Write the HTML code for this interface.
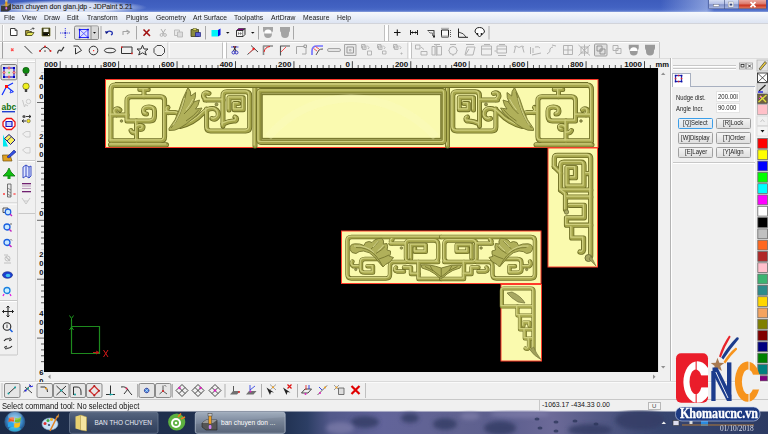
<!DOCTYPE html>
<html><head><meta charset="utf-8">
<style>
*{margin:0;padding:0;box-sizing:border-box}
html,body{width:768px;height:434px;overflow:hidden;background:#f0f0f0;font-family:"Liberation Sans",sans-serif;color:#000}
.a{position:absolute}
.t{position:absolute;white-space:nowrap;line-height:1}
#title{left:0;top:0;width:768px;height:12px;background:linear-gradient(90deg,rgba(255,255,255,0) 0%,rgba(255,255,255,0) 86%,rgba(190,205,240,.55) 92%,rgba(255,255,255,0) 93%),linear-gradient(180deg,#3d5cbc 0%,#4262c2 60%,#4c6cc8 85%,#8aa0dc 100%)}
#menu{left:0;top:12px;width:768px;height:12px;background:linear-gradient(180deg,#f6f8fc 0%,#e7ecf6 60%,#dde4f2 100%);border-bottom:1px solid #d2d4da}
.mi{position:absolute;top:14.3px;font-size:7.3px;color:#1a1a1a;transform:scaleX(.93);transform-origin:0 0;white-space:nowrap;line-height:1}
.sep{position:absolute;width:1px;background:#a0a0a0;border-right:1px solid #fff}
.grip{position:absolute;width:3px;border-left:1px solid #fff;border-right:1px solid #b8b8b8}
</style></head><body>
<!-- title bar -->
<div id="title" class="a"></div>
<div class="a" style="left:0;top:0;width:150px;height:12px;background:radial-gradient(ellipse 52% 62% at 46% 62%,rgba(226,232,246,.97) 0%,rgba(222,229,245,.92) 62%,rgba(200,212,238,.4) 85%,rgba(160,180,225,0) 100%)"></div>
<svg class="a" style="left:0;top:0" width="12" height="12" viewBox="0 0 12 12">
 <path d="M1 6 L5 3.5 H11 V9.5 L8 11.5 H1 Z" fill="#3a3a3a"/>
 <path d="M1 6 L5 3.5 H11 L8 6 Z" fill="#8a8a8a"/>
 <rect x="5.3" y="0.5" width="2" height="6" fill="#e8a020"/>
 <rect x="5" y="0" width="2.6" height="1.6" fill="#bbb"/>
 <rect x="5.4" y="7" width="1.8" height="2.5" rx=".8" fill="#d070f0"/>
</svg>
<div class="t" style="left:12px;top:3.9px;font-size:6.9px;color:#1c1c1c;-webkit-text-stroke:.12px #1c1c1c">ban chuyen don gian.jdp - JDPaint 5.21</div>
<svg class="a" style="left:700px;top:0" width="68" height="12" viewBox="700 0 68 12">
 <defs>
  <linearGradient id="wb" x1="0" x2="0" y1="0" y2="1"><stop offset="0" stop-color="#d4dcf2"/><stop offset=".45" stop-color="#b4c0e6"/><stop offset=".55" stop-color="#8696cc"/><stop offset="1" stop-color="#a8b6e2"/></linearGradient>
  <linearGradient id="wc" x1="0" x2="0" y1="0" y2="1"><stop offset="0" stop-color="#eaa8a0"/><stop offset=".45" stop-color="#dc7a6c"/><stop offset=".6" stop-color="#c83420"/><stop offset="1" stop-color="#e07a60"/></linearGradient>
 </defs>
 <path d="M708.5 0 V8 Q708.5 9 709.5 9 H765.5 Q766.5 9 766.5 8 V0 Z" fill="#3c4c80"/>
 <rect x="709" y="0" width="15" height="8.5" fill="url(#wb)"/>
 <rect x="724.6" y="0" width="14" height="8.5" fill="url(#wb)"/>
 <rect x="739" y="0" width="27" height="8.5" fill="url(#wc)"/>
 <rect x="713.5" y="4.6" width="5.5" height="1.8" fill="#fff" stroke="#555" stroke-width=".3"/>
 <rect x="728.2" y="2" width="5.5" height="5" fill="#fff" stroke="#555" stroke-width=".3"/>
 <rect x="729.6" y="3.6" width="2.7" height="2" fill="#3a4a80"/>
 <path d="M750.5 2 L755.5 7.2 M755.5 2 L750.5 7.2" stroke="#fff" stroke-width="1.8"/>
</svg>
<!-- menu -->
<div id="menu" class="a"></div>
<div class="mi" style="left:4px">File</div>
<div class="mi" style="left:21.5px">View</div>
<div class="mi" style="left:44px">Draw</div>
<div class="mi" style="left:67px">Edit</div>
<div class="mi" style="left:86.5px">Transform</div>
<div class="mi" style="left:125.5px">Plugins</div>
<div class="mi" style="left:155.5px">Geometry</div>
<div class="mi" style="left:192.5px">Art Surface</div>
<div class="mi" style="left:233.5px">Toolpaths</div>
<div class="mi" style="left:270.5px">ArtDraw</div>
<div class="mi" style="left:303px">Measure</div>
<div class="mi" style="left:336.5px">Help</div>

<!-- canvas -->
<div class="a" style="left:44px;top:68px;width:614px;height:304px;background:#000"></div>



<!-- canvas ornaments -->
<svg class="a" style="left:0;top:0" width="768" height="434" viewBox="0 0 768 434">
<defs>
<style>
.pf{fill:#fafaae;stroke:#ff3a2a;stroke-width:1}
.dk{fill:none;stroke:#6e6e26;stroke-width:5;stroke-linejoin:round;stroke-linecap:round}
.md{fill:none;stroke:#a6a64c;stroke-width:3.3;stroke-linejoin:round;stroke-linecap:round}
.lt{fill:none;stroke:#cfcf7e;stroke-width:1.3;stroke-linejoin:round;stroke-linecap:round}
.lf{fill:#b0b05a;stroke:#74742e;stroke-width:.9;stroke-linejoin:round}
.vn{fill:none;stroke:#76762e;stroke-width:.9}
</style>
<g id="o1">
 <path d="M111 140.8 V90 Q111 85 115 85 H351.25"/>
 <path d="M110.5 144.8 H166.5"/>
 <path d="M111 140.8 H160.6 Q164.6 140.8 164.6 136.8 V100.7 Q164.6 96.7 160.6 96.7 H131 Q127 96.7 127 100.7 V121 H150 Q154.5 121 154.5 116 V111 Q154.5 107 149 107 Q143.5 107 143.5 111 Q143.5 114 146.5 114"/>
 <path d="M144 86 V96.7 M139.8 89.6 H148.2"/>
 <path d="M111 115 H127 M116.5 115 Q113.5 112 115.5 109.5 Q118 108 120 110"/>
 <path d="M136.5 121 V140.8 M136.5 127.5 Q140 124 143 126.5 Q143.5 129.5 140.5 129.5 M136.5 133 Q132 133.5 131 130.5"/>
 <path d="M206.6 109 V127 Q206.6 131 210.6 131 H245.7 Q249.7 131 249.7 127 V95.8 Q249.7 91.8 245.7 91.8 H227 Q223 91.8 223 95.8 V126"/>
 <path d="M229 110 V97.8 H243.2 V109.7 H234.2 V103.6 H238.5"/>
 <path d="M205 100 H223 M206.5 100 Q202.5 97.5 204 94 Q206 92 209 93.5"/>
 <path d="M223 124 Q230 120.5 235.5 121 Q238 118.5 235 117"/>
 <path d="M255 86 V146"/>
 <path d="M166 112.5 H175 Q179.5 113 180.5 118 M168.5 112.5 Q165.5 110 168 107.5"/>
 <path d="M180 126.5 Q194 123 202.5 113.5 Q208.5 107.5 214.5 108.8 Q219.5 111 218 116.5 Q215.5 120.5 212 118.5"/>
</g>
<g id="leaf1">
 <path d="M169 128.5 Q176 120 179 110 Q182 99 188 87.5 Q191.5 91.5 190.8 96 L195.5 92.5 Q196 98 193.5 102 L199.5 100 Q198.5 106 195.5 109 L202 108 Q199.5 114 193 118.5 Q186 124.5 180 128 Q175 131 169 130.5 Z"/>
 <path class="vn" d="M171 128 Q181 118 186.5 92 M184 114 Q190 109 194 102 M186 121 Q194 116 199 109.5"/>
 <path fill="none" stroke="#d6d690" stroke-width=".9" d="M173 125.5 Q180 116 184.5 98 M186 110 Q190 105 193 99"/>
</g>
<g id="o2">
 <path d="M554.3 166.7 V158.4 Q554.3 155.4 557.3 155.4 H587.7 Q590.7 155.4 590.7 158.4 V256"/>
 <path d="M554.3 166.7 L560.6 173 V190 H590.7"/>
 <path d="M560.6 174 V166 Q560.6 162.2 564 162.2 H581 Q584 162.2 584 165.2 V186 H567 V167.5 H575.5 V177.7 H571"/>
 <path d="M586.5 173.6 H590"/>
 <path d="M560.6 190 L565.5 194 V209.5"/>
 <path d="M567.5 197 H590.7"/>
 <path d="M569.5 205.3 H584.3 V217.8 H566.5 V225.2 H590.7"/>
 <path d="M571.7 227.5 V238 H583.6 V250 Q583 253 580 252"/>
</g>
<g id="o3">
 <path d="M441.25 237 H351.5 Q347.5 237 347.5 241 V274.5 Q347.5 278.5 351.5 278.5 H386 Q390 278.5 390 274.5 V266 Q390 262 394 262 H406"/>
 <path d="M438.2 262 H410 Q406 262 406 258 V244.5 Q406 240.5 410 240.5 H434.2 Q438.2 240.5 438.2 244.5 V258 Q438.2 262 434.2 262"/>
 <path d="M411 258.5 V245 H425.8 V251.8 H415 V248.5"/>
 <path d="M390.5 243.6 H406 M392 243.6 Q389.5 241 392.5 239.5"/>
 <path d="M386.5 259 H365 Q361 259 361 263 V269.5 Q361 272.6 365 272.6 H373 V266.2 H367.5"/>
 <path d="M359 266.4 H353.5 Q350.5 264.5 352.5 261.5"/>
 <path d="M396 267.5 Q393.5 270.5 397 271.5 H404 M404 267.5 H411 V274 H418.5"/>
 <path d="M418.5 262 V279 H441.25"/>
</g>
<g id="o4">
 <path d="M533.5 350 V291 Q533.5 288.5 531 288.5 H504 Q501.8 288.5 501.8 291 V306.5 H533"/>
 <path d="M517.5 306.5 V315.5 H533 M520 315.5 V329.5 H533 M524.8 329.5 V338.5 H533 M529 338.5 V347 Q528 350 525.5 348.5"/>
 <path d="M523.5 326 V322.5 H529.5 V326"/>
</g>
<g id="leaf3">
 <path d="M350 249.5 Q349 244.5 354.5 243.8 Q360 243.3 364 245.5 L365.5 242.5 Q369.5 240.5 372 242.5 L374.5 240 Q378 238 382 238.3 Q384.5 241 383.3 244 L387 243.5 Q388.3 247 387 250 L390.5 251 Q391 254 389.5 256.3 L393.5 257.5 Q391 262.5 385.5 264.5 L383 267 Q378.5 262 374.5 257 Q369.5 251.5 363.5 251 Q358.5 251 356 253.5 Q351 253.5 350 249.5 Z"/>
 <path class="vn" d="M356 247.5 Q368 247 376 256 Q380 261 382.5 266 M371 249 Q376 245 379 241 M376 253.5 Q382 250 385 246.5 M379 259 Q385 257 389 255"/>
 <path fill="none" stroke="#d6d690" stroke-width=".9" d="M354 246 Q366 245 374 252.5 M373 247 Q376 243.5 378.5 241 M377.5 251 Q381.5 248 383.5 245"/>
</g>
<g id="fan3">
 <path d="M421 265 Q430 264 441.25 268 Q452 264 461.5 265 L460 268 Q452 270 447 274 Q443 278 441.25 278.5 Q439 278 435 274 Q430 270 422 268 Z"/>
 <path class="vn" d="M425 266.5 Q434 270 441.25 277 Q448 270 457.5 266.5 M441.25 268 V277 M430 265.5 L433 271 M452 265.5 L449 271"/>
</g>
</defs>
<!-- panel 1 -->
<rect class="pf" x="105.5" y="79.5" width="492.5" height="68"/>
<g>
 <use href="#o1" class="dk"/>
 <use href="#o1" class="md"/>
 <use href="#o1" class="lt" transform="translate(-.9,-.9)"/>
 <use href="#o1" class="dk" transform="translate(702.5,0) scale(-1,1)"/>
 <use href="#o1" class="md" transform="translate(702.5,0) scale(-1,1)"/>
 <use href="#o1" class="lt" transform="translate(701.6,-.9) scale(-1,1)"/>
 <path d="M115 85 H588" class="dk" style="stroke-width:5.8;stroke-linecap:butt"/><path d="M115 85 H588" class="md" style="stroke-width:4;stroke-linecap:butt"/><path d="M115 84 H588" class="lt" style="stroke-width:1.4;stroke-linecap:butt"/>
 <use href="#leaf1" class="lf"/>
 <use href="#leaf1" class="lf" transform="translate(702.5,0) scale(-1,1)"/>
 <g fill="#9a9a50" stroke="#6a6a30" stroke-width=".7"><circle cx="216.5" cy="104.4" r="1.5"/><circle cx="486" cy="104.4" r="1.5"/><circle cx="121.5" cy="121" r="1.3"/><circle cx="581" cy="121" r="1.3"/></g>
 <rect x="258.8" y="90.8" width="185.5" height="51.5" rx="2" fill="none" stroke="#6e6e26" stroke-width="5.4"/>
 <rect x="258.8" y="90.8" width="185.5" height="51.5" rx="2" fill="none" stroke="#a6a64c" stroke-width="3.6"/>
 <rect x="258" y="90" width="185.5" height="51.5" rx="2" fill="none" stroke="#cfcf7e" stroke-width="1.2"/>
 <rect x="262" y="94.5" width="179" height="44" fill="none" stroke="#7a7a30" stroke-width="1.6"/>
 <rect x="263" y="95.5" width="177" height="42" fill="#fafab0"/>
 <path d="M268 137 Q300 100 351 98 Q402 100 436 137" fill="none" stroke="#fdfdc4" stroke-width="8" opacity=".3"/>
</g>

<!-- panel 2 -->
<rect class="pf" x="548" y="148" width="49.5" height="119"/>
<use href="#o2" class="dk" style="stroke-width:5.2"/>
<use href="#o2" class="md" style="stroke-width:3.5"/>
<use href="#o2" class="lt" transform="translate(-.9,-.9)"/>
<circle cx="566.5" cy="212" r="2.2" fill="#a8a862" stroke="#707038" stroke-width=".8"/>
<circle cx="588.5" cy="258" r="3.5" fill="#a8a862" stroke="#707038" stroke-width="1"/>
<path d="M589 259 L596 266 L591 256 Z" fill="#a0a05a" stroke="#707038" stroke-width=".6"/>
<!-- panel 3 -->
<rect class="pf" x="341.5" y="231" width="199.5" height="52.5"/>
<use href="#o3" class="dk" style="stroke-width:4.4"/>
<use href="#o3" class="md" style="stroke-width:2.9"/>
<use href="#o3" class="lt" transform="translate(-.8,-.8)"/>
<use href="#o3" class="dk" style="stroke-width:4.4" transform="translate(882.5,0) scale(-1,1)"/>
<use href="#o3" class="md" style="stroke-width:2.9" transform="translate(882.5,0) scale(-1,1)"/>
<use href="#o3" class="lt" transform="translate(881.7,-.8) scale(-1,1)"/>
<use href="#leaf3" class="lf"/>
<use href="#leaf3" class="lf" transform="translate(882.5,0) scale(-1,1)"/>
<use href="#fan3" class="lf"/>
<g fill="#9a9a50" stroke="#6a6a30" stroke-width=".6"><circle cx="401.4" cy="248" r="1.3"/><circle cx="355.8" cy="269.5" r="1.2"/><circle cx="481.1" cy="248" r="1.3"/><circle cx="526.7" cy="269.5" r="1.2"/></g>
<!-- panel 4 -->
<rect class="pf" x="501" y="284.5" width="40.5" height="76.5"/>
<use href="#o4" class="dk" style="stroke-width:4.2"/>
<use href="#o4" class="md" style="stroke-width:2.8"/>
<use href="#o4" class="lt" transform="translate(-.8,-.8)"/>
<path d="M507 293 L512 292 Q521 296 525 303 L518 302 Q511 298 507 293 Z" fill="#a8a862" stroke="#707038" stroke-width=".7"/>
<path d="M533.5 347 Q536 353 541 359.5 Q534 356 530 350 Z" fill="#a0a05a" stroke="#707038" stroke-width=".6"/>
<!-- axis -->
<path d="M71.5 320 V353.5 H99.5 V326.5 H71.5" fill="none" stroke="#1e8a1e" stroke-width="1.2"/>
<path d="M69.5 315.5 L71.5 318.5 L73.5 315.5 M71.5 318.5 V321" fill="none" stroke="#1e9a1e" stroke-width="1"/>
<path d="M69.5 330 L71.5 327 L73.5 330" fill="none" stroke="#1e9a1e" stroke-width="1"/>
<path d="M93 352.5 H99 M96 351 L99 352.5 L96 354" fill="none" stroke="#c01818" stroke-width="1"/>
<path d="M103.5 350 L108 357 M108 350 L103.5 357" fill="none" stroke="#d01818" stroke-width="1"/>
</svg>

<!-- toolbar rows -->
<div class="a" style="left:0;top:41px;width:659px;height:1px;background:#c8c8c8"></div>
<div class="a" style="left:0;top:42px;width:659px;height:1px;background:#fff"></div>
<div class="a" style="left:659px;top:42px;width:1px;height:16px;background:#c8c8c8"></div>
<div class="a" style="left:0;top:58px;width:768px;height:1px;background:#dcdcdc"></div>
<!-- ruler top -->
<div class="a" style="left:44px;top:60px;width:626px;height:8px;background:#f0f0f0"></div>
<!-- vertical scrollbar -->
<div class="a" style="left:658px;top:68px;width:12px;height:304px;background:#f0f0f0;border-left:1px solid #e4e4e4"></div>
<div class="a" style="left:44px;top:372px;width:614px;height:9px;background:#f0f0f0"></div>
<div class="a" style="left:670px;top:58px;width:1px;height:323px;background:#b4b4b4"></div>
<div class="a" style="left:671px;top:58px;width:1px;height:323px;background:#fff"></div>
<!-- bottom -->
<div class="a" style="left:0;top:381px;width:768px;height:1px;background:#dadada"></div><div class="a" style="left:0;top:382px;width:768px;height:1px;background:#fafafa"></div>
<div class="a" style="left:0;top:399px;width:768px;height:1px;background:#c8c8c8"></div>
<div class="a" style="left:0;top:400px;width:768px;height:11px;background:#f0f0f0"></div>
<div class="a" style="left:539px;top:400px;width:1px;height:11px;background:#c8c8c8"></div>
<div class="t" style="left:1.5px;top:401.7px;font-size:8.4px;color:#111;transform:scaleX(.905);transform-origin:0 0">Select command tool: No selected object</div>
<div class="t" style="left:542px;top:402px;font-size:6.9px;color:#111">-1063.17 -434.33 0.00</div>
<div class="a" style="left:648px;top:401.5px;width:13px;height:8px;border:1px solid #b8b8b8;background:#f4f4f4"></div>
<div class="t" style="left:652px;top:402.5px;font-size:6px;color:#444">U</div>

<!-- ===== TOOLBAR ROW 1 ===== -->
<div class="a" style="left:1.5px;top:25px;width:1px;height:16px;background:#c4c4c4"></div>
<div class="a" style="left:3px;top:25px;width:1px;height:16px;background:#fff"></div>
<svg class="a" style="left:0;top:23px" width="500" height="18" viewBox="0 23 500 18">
 <g stroke-linejoin="round">
 <!-- new -->
 <path d="M10.5 28.5 H15 L17 30.5 V35.5 H10.5 Z" fill="#fff" stroke="#3c3c3c" stroke-width="1"/>
 <path d="M15 28.5 V30.5 H17" fill="none" stroke="#3c3c3c" stroke-width=".8"/>
 <!-- open -->
 <path d="M25.5 30.5 H29 L30 31.5 H31.5 V35.5 H25.5 Z" fill="#a89a38" stroke="#3c3c20" stroke-width=".8"/>
 <path d="M26 35.5 L27.5 32.5 H34 L32 35.5 Z" fill="#e6e85a" stroke="#4a4a20" stroke-width=".8"/>
 <path d="M30.5 30 Q32 27.5 34 28.5 M33 27.5 L34 28.5 L33.2 29.6" fill="none" stroke="#333" stroke-width=".8"/>
 <!-- save -->
 <rect x="42" y="28" width="8" height="8" fill="#2a2a10" />
 <rect x="43.5" y="28.5" width="5" height="3.5" fill="#f4f4e8"/>
 <rect x="43.5" y="33.5" width="5" height="2.5" fill="#0a0a0a"/>
 <rect x="48" y="34" width="1" height="1" fill="#fff"/>
 <rect x="42" y="28" width="8" height="8" fill="none" stroke="#6a6a20" stroke-width=".7"/>
 <!-- sep -->
 <rect x="55" y="26" width="1" height="13.5" fill="#a8a8a8"/>
 <!-- crosshair -->
 <path d="M60 33 H70 M65.3 28 V38" stroke="#3a40e8" stroke-width="1" stroke-dasharray="1 .8" fill="none"/>
 <rect x="64.5" y="32.2" width="1.6" height="1.6" fill="#2020c0"/>
 <!-- pressed btn -->
 <rect x="74.5" y="26" width="24" height="13.5" rx="1.5" fill="#e2e2e2" stroke="#8a8a8a" stroke-width="1"/>
 <rect x="91" y="26.5" width="7" height="12.5" fill="#d8d8d8"/>
 <rect x="90.5" y="26" width="1" height="13.5" fill="#8a8a8a"/>
 <path d="M93 32 H96 L94.5 33.8 Z" fill="#111"/>
 <rect x="79.5" y="29.5" width="8.5" height="8" fill="#dde0ff" stroke="#2a2aff" stroke-width="1"/>
 <path d="M79.5 29.5 L88 37.5 M88 29.5 L79.5 37.5" stroke="#4a4aff" stroke-width=".8"/>
 <g fill="#0000d8"><rect x="78.8" y="28.8" width="1.5" height="1.5"/><rect x="87.3" y="28.8" width="1.5" height="1.5"/><rect x="78.8" y="36.8" width="1.5" height="1.5"/><rect x="87.3" y="36.8" width="1.5" height="1.5"/></g>
 <rect x="100.5" y="26" width="1" height="13.5" fill="#a8a8a8"/>
 <!-- undo -->
 <path d="M106 32.5 Q109 30 112 32 Q113 34 111 35" fill="none" stroke="#2030b0" stroke-width="1.3"/>
 <path d="M105 31 L106 34 L108.5 32.5 Z" fill="#101880"/>
 <!-- redo gray -->
 <path d="M123 35 V31.5 H128 M126.5 30 L129.5 32 L127 34" fill="none" stroke="#a4a4a4" stroke-width="1.1"/>
 <rect x="136" y="26" width="1" height="13.5" fill="#a8a8a8"/>
 <!-- delete X -->
 <path d="M143.5 29.5 L150 36 M149.5 29.5 L143.5 35.8" stroke="#a01010" stroke-width="1.6" fill="none"/>
 <!-- scissors gray -->
 <path d="M161 29 L164 34 M165.5 29 L162.5 34" stroke="#b0b0b0" stroke-width="1" fill="none"/>
 <circle cx="161.5" cy="35" r="1.4" fill="none" stroke="#b0b0b0" stroke-width=".9"/>
 <circle cx="165" cy="35" r="1.4" fill="none" stroke="#b0b0b0" stroke-width=".9"/>
 <!-- copy gray -->
 <rect x="174.5" y="30" width="5" height="5.5" fill="#e8e8e8" stroke="#b8b8b8" stroke-width=".9"/>
 <rect x="177.5" y="32" width="5" height="5" fill="#dcdcdc" stroke="#b8b8b8" stroke-width=".9"/>
 <!-- paste -->
 <rect x="191" y="29.5" width="7.5" height="7" fill="#8a8a40" stroke="#3a3a18" stroke-width=".8"/>
 <rect x="193" y="28.5" width="3.5" height="1.8" fill="#e8e860" stroke="#3a3a18" stroke-width=".5"/>
 <rect x="195.5" y="32.5" width="5" height="4" fill="#5860d0" stroke="#20207a" stroke-width=".7"/>
 <rect x="205" y="26" width="1" height="13.5" fill="#a8a8a8"/>
 <!-- cube cyan -->
 <rect x="211.5" y="30" width="6.5" height="6.5" fill="#00f4f8"/>
 <path d="M218 30 L220.5 28.5 V35 L218 36.5 Z" fill="#0010e8"/>
 <path d="M226 32 H229.5 L227.75 33.8 Z" fill="#111"/>
 <!-- cube purple -->
 <path d="M236.5 30.5 L238.5 28.5 H245 L243 30.5 Z" fill="#800080" stroke="#222" stroke-width=".6"/>
 <rect x="236.5" y="30.5" width="6.5" height="6" fill="#f4f4f4" stroke="#222" stroke-width=".9"/>
 <path d="M243 30.5 L245 28.5 V34.5 L243 36.5" fill="#ddd" stroke="#222" stroke-width=".9"/>
 <path d="M238.5 32 V35 M240.5 32 V35 M238 33.5 H242" stroke="#555" stroke-width=".5"/>
 <path d="M251 32 H254.5 L252.75 33.8 Z" fill="#111"/>
 <rect x="258" y="26" width="1" height="13.5" fill="#a8a8a8"/>
 <!-- shields -->
 <path d="M263 27 H273 V30 Q273 31.5 272 32.5 V33.5 Q272 38 268.0 38 Q264 38 264 33.5 V32.5 Q263 31.5 263 30 Z" fill="#a4a4a4"/>
 <path d="M264.2 33.4 A3.8 3.8 0 0 1 271.8 33.4 Z" fill="#fff"/>
 <path d="M280 27 H290 V30 Q290 31.5 289 32.5 V33.5 Q289 38 285.0 38 Q281 38 281 33.5 V32.5 Q280 31.5 280 30 Z" fill="#a4a4a4"/>
 <rect x="293" y="26" width="1" height="13.5" fill="#a8a8a8"/>
 <!-- grip 2 -->
 <rect x="384" y="25" width="1" height="16" fill="#c0c0c0"/>
 <rect x="385" y="25" width="3" height="16" fill="#fff"/>
 <rect x="388" y="25" width="1" height="16" fill="#c0c0c0"/>
 <!-- plus -->
 <path d="M394 32.5 H400.5 M397.3 29.5 V35.8" stroke="#111" stroke-width="1.1"/>
 <!-- H bar -->
 <path d="M410.5 30 V35 M417.5 30 V35 M410.5 32.5 H417.5" stroke="#222" stroke-width="1"/>
 <path d="M411 32.5 L413 31.3 V33.7 Z M417 32.5 L415 31.3 V33.7 Z" fill="#111"/>
 <!-- corner icon -->
 <path d="M427.5 30.5 H434 V37" fill="none" stroke="#444" stroke-width="1.1"/>
 <path d="M428.5 31.5 L430 33 H432.5 V36" fill="none" stroke="#777" stroke-width="1"/>
 <rect x="433" y="35.5" width="2" height="2" fill="#222"/>
 <!-- box dims -->
 <rect x="441.5" y="30" width="7" height="7" fill="#f8f8f8" stroke="#222" stroke-width="1"/>
 <path d="M441.5 28.3 H448.5 M450.5 30 V37" stroke="#333" stroke-width=".8" stroke-dasharray="1 1"/>
 <rect x="441.5" y="35.5" width="7" height="1.5" fill="#aaa"/>
 <!-- angle -->
 <path d="M458.5 28.5 V37.3 H468" fill="none" stroke="#222" stroke-width="1"/>
 <path d="M458.5 32 Q464 33 466 37" fill="none" stroke="#333" stroke-width=".9"/>
 <!-- fan pin -->
 <path d="M475 32 Q475 27.5 479.5 27.5 Q484 27.5 484.5 32 L479.5 37 Z" fill="#fff" stroke="#222" stroke-width="1"/>
 <circle cx="477.5" cy="34" r=".9" fill="#111"/><circle cx="481.5" cy="34" r=".9" fill="#111"/>
 <rect x="488.5" y="26" width="1" height="13.5" fill="#a8a8a8"/>
 </g>
</svg>
<!-- ===== TOOLBAR ROW 2 ===== -->
<svg class="a" style="left:0;top:42px" width="660" height="17" viewBox="0 42 660 17">
 <g stroke-linejoin="round" fill="none">
 <rect x="2" y="42" width="1" height="16.5" fill="#a0a0a0"/>
 <path d="M11 48.5 L13.5 51 M13.5 48.5 L11 51" stroke="#ff5050" stroke-width="1.1"/>
 <path d="M24.5 46 L32 53.5" stroke="#333" stroke-width="1"/>
 <path d="M40 51 Q45 43 50.5 51" stroke="#333" stroke-width="1"/>
 <circle cx="40" cy="51" r="1" fill="#e02020"/><circle cx="45" cy="46.5" r="1" fill="#e02020"/><circle cx="50.5" cy="51" r="1" fill="#e02020"/>
 <path d="M44 51.5 L45 50 L46 51.5 Z" fill="#222"/>
 <path d="M57.5 53.5 Q58 50 60 50 Q61 52 62 50 Q63 48 64 47" stroke="#333" stroke-width="1.1"/>
 <path d="M73.5 46 H78 L81.5 50.5 L75.5 54 V48" stroke="#333" stroke-width="1"/>
 <circle cx="93.5" cy="50.5" r="4.3" stroke="#333" stroke-width="1"/>
 <rect x="93" y="50" width="1.2" height="1.2" fill="#ff3030"/>
 <ellipse cx="110" cy="50.5" rx="5.6" ry="2.3" stroke="#333" stroke-width="1"/>
 <rect x="121.5" y="47" width="10.5" height="6.5" stroke="#333" stroke-width="1"/>
 <rect x="121" y="46.5" width="1.5" height="1.5" fill="#e02020"/><rect x="131.2" y="52.7" width="1.5" height="1.5" fill="#e02020"/>
 <path d="M142.5 45.3 L144 49 L148 49 L145 51.5 L146.3 55 L142.5 52.8 L138.7 55 L140 51.5 L137 49 L141 49 Z" stroke="#333" stroke-width="1"/>
 <path d="M157 45.5 H161.5 L164.5 48.5 V52.5 L161.5 55.5 H157 L154 52.5 V48.5 Z" stroke="#444" stroke-width="1"/>
 <rect x="167.5" y="42.5" width="1" height="15.5" fill="#c4c4c4"/>
 <rect x="168.5" y="42.5" width="1" height="15.5" fill="#fff"/>
 <!-- grip -->
 <rect x="222" y="42.5" width="1" height="16" fill="#c0c0c0"/>
 <rect x="223" y="42.5" width="3" height="16" fill="#fff"/>
 <rect x="226" y="42.5" width="1" height="16" fill="#c0c0c0"/>
 <!-- scissors blue -->
 <path d="M231 47 H238.5" stroke="#5050e0" stroke-width="1"/>
 <path d="M233.5 46 L236 51 M236 46 L233.5 51" stroke="#222" stroke-width="1"/>
 <circle cx="233.5" cy="52.5" r="1.5" stroke="#3030c0" stroke-width="1"/><circle cx="236.5" cy="52.5" r="1.5" stroke="#3030c0" stroke-width="1"/>
 <rect x="234" y="46.3" width="1.2" height="1.2" fill="#e02020"/>
 <!-- line w dot -->
 <path d="M247.5 54.5 L255 48 M251 45.5 L258 52" stroke="#333" stroke-width=".9"/>
 <circle cx="253.5" cy="49" r="1.2" fill="#ff2020"/>
 <path d="M249 53 L253 49.5" stroke="#ff6060" stroke-width=".8"/>
 <!-- corner fillet -->
 <path d="M263.5 55 V46 H273" stroke="#8c8c8c" stroke-width="1.6"/>
 <path d="M264 52 Q265 47 270 46.5" stroke="#e82020" stroke-width="1"/>
 <!-- chamfer -->
 <path d="M280.5 55.5 V46 H290" stroke="#555" stroke-width="1.1"/>
 <path d="M281 52 L286 47" stroke="#ff4040" stroke-width=".9"/>
 <!-- gray corner square -->
 <path d="M296.5 54 V46.5 H304 M306 48 V54 H302" stroke="#a8a8a8" stroke-width="1"/>
 <rect x="304" y="45" width="2.5" height="2.5" stroke="#888" stroke-width=".8"/>
 <!-- offset -->
 <path d="M312 55 V51 Q312 46 317 46 H323" stroke="#7070ff" stroke-width="1.6"/>
 <path d="M316 55 L319 50 Q320 49 323 49" stroke="#555" stroke-width="1"/>
 <path d="M313.5 48.5 L317 51 M315.5 46.5 L319 49" stroke="#ff4040" stroke-width=".9"/>
 <!-- rounded bar gray -->
 <rect x="327.5" y="48.5" width="13" height="3" rx="1.5" stroke="#a8a8a8" stroke-width="1" fill="#e4e4e4"/>
 <!-- square double gray -->
 <rect x="344.5" y="44.5" width="11.5" height="11" stroke="#a8a8a8" stroke-width="1" fill="#e8e8e8"/>
 <rect x="347" y="47" width="6.5" height="6" stroke="#9c9c9c" stroke-width="1"/>
 <rect x="349.5" y="49.5" width="1.5" height="1.5" stroke="#9c9c9c" stroke-width=".6"/>
 <!-- gray icons -->
 <g stroke="#b0b0b0" stroke-width=".9">
 <rect x="361.5" y="44.5" width="3.5" height="3.5"/><rect x="362.5" y="46" width="3.5" height="3.5"/><path d="M367 45.5 L369 47.5 L368 49"/><rect x="367.5" y="51" width="4" height="4"/>
 <rect x="377.5" y="44.5" width="3.5" height="3.5"/><rect x="378.5" y="46" width="3.5" height="3.5"/><path d="M383 45.5 L385 47.5 L384 49"/><rect x="382.5" y="51" width="3.5" height="3"/>
 <rect x="393.5" y="44.5" width="3.5" height="3.5"/><rect x="394.5" y="46" width="3.5" height="3.5"/><path d="M399 45.5 L401 47.5 L400 49"/><rect x="401" y="53" width="1" height="1"/>
 </g>
 <rect x="407.5" y="42.5" width="1" height="16" fill="#c0c0c0"/>
 <rect x="408.5" y="42.5" width="2.5" height="16" fill="#fff"/>
 <rect x="411" y="42.5" width="1" height="16" fill="#c0c0c0"/>
 <g stroke="#adadad" stroke-width=".9">
 <rect x="415.5" y="45" width="4.5" height="4"/><path d="M421 47 L424 49.5"/><rect x="421" y="51.5" width="6" height="3.5"/>
 <rect x="432" y="46.5" width="3" height="8.5"/><rect x="437" y="46.5" width="4.5" height="8.5"/><path d="M434 44.5 H440 M436.2 45 V56"/>
 <circle cx="453" cy="50.5" r="4"/><path d="M450 44.5 H456 M448.5 50.5 H449 M457 50.5 H457.5 M453 55 V56"/>
 <path d="M465 55 L467 47 H475 L473 55 Z M466 44.5 H474 M466 54 L469 49"/>
 <rect x="481.5" y="46" width="10" height="9"/><path d="M481.5 49 H491.5 M484 44.5 H490"/>
 <rect x="497" y="46" width="9.5" height="7"/><path d="M497 49 H506.5 M498 55.5 H506 M499 44.5 H505 M496.5 51 H494.5"/>
 <path d="M514 47 L516 46 Q519 49 522 46 L524 47 M515.5 47 L514 53 M522.5 47 L524 52.5"/>
 <path d="M530.5 47 V54 M533 48 V53 M535 47 Q539 46 540 48 M532 55 L541 53"/>
 <path d="M547 54 Q551 52 550 49 Q551 47 553 47 M552 45 L556 46"/>
 <rect x="563.5" y="45.5" width="9" height="9"/><path d="M568 45.5 V54.5 M563.5 50 H572.5"/>
 <rect x="581" y="47" width="7" height="6"/><path d="M578.5 45 L590 55.5 M590 45 L578.5 55.5 M584.5 44.5 V56"/>
 <rect x="613" y="45.5" width="5" height="5"/><rect x="616" y="48.5" width="5" height="5"/>
 </g>
 <!-- pressed squares -->
 <rect x="594.5" y="44" width="12.5" height="12" rx="1" fill="#e0e0e0" stroke="#a0a0a0" stroke-width="1"/>
 <rect x="597" y="46" width="5" height="5" stroke="#8c8c8c" stroke-width=".9"/><rect x="600" y="49" width="5" height="5" stroke="#8c8c8c" stroke-width=".9"/>
 <!-- shields -->
 <path d="M628.75 44.8 H638.75 V47.8 Q638.75 49.3 637.75 50.3 V51.3 Q637.75 55.599999999999994 633.75 55.599999999999994 Q629.75 55.599999999999994 629.75 51.3 V50.3 Q628.75 49.3 628.75 47.8 Z" fill="#9a9a9a"/>
 <path d="M629.95 51.1 A3.8 3.8 0 0 1 637.55 51.1 Z" fill="#fff"/>
 <path d="M645 44.8 H655 V47.8 Q655 49.3 654 50.3 V51.3 Q654 55.599999999999994 650.0 55.599999999999994 Q646 55.599999999999994 646 51.3 V50.3 Q645 49.3 645 47.8 Z" fill="#9a9a9a"/>
 </g>
</svg>
<!-- ===== RULER ===== -->
<svg class="a" style="left:44px;top:60px" width="626" height="8" viewBox="44 60 626 8" font-family="Liberation Sans" font-weight="bold">
 <g id="rticks"><rect x="48.01" y="65" width="1" height="3" fill="#555"/><rect x="53.86" y="65" width="1" height="3" fill="#555"/><rect x="59.70" y="61.2" width="1" height="6.8" fill="#444"/><rect x="65.54" y="65" width="1" height="3" fill="#555"/><rect x="71.39" y="65" width="1" height="3" fill="#555"/><rect x="77.23" y="65" width="1" height="3" fill="#555"/><rect x="83.07" y="65" width="1" height="3" fill="#555"/><rect x="88.91" y="65" width="1" height="3" fill="#555"/><rect x="94.76" y="65" width="1" height="3" fill="#555"/><rect x="100.60" y="65" width="1" height="3" fill="#555"/><rect x="106.44" y="65" width="1" height="3" fill="#555"/><rect x="112.29" y="65" width="1" height="3" fill="#555"/><rect x="118.13" y="61.2" width="1" height="6.8" fill="#444"/><rect x="123.97" y="65" width="1" height="3" fill="#555"/><rect x="129.82" y="65" width="1" height="3" fill="#555"/><rect x="135.66" y="65" width="1" height="3" fill="#555"/><rect x="141.50" y="65" width="1" height="3" fill="#555"/><rect x="147.35" y="65" width="1" height="3" fill="#555"/><rect x="153.19" y="65" width="1" height="3" fill="#555"/><rect x="159.03" y="65" width="1" height="3" fill="#555"/><rect x="164.87" y="65" width="1" height="3" fill="#555"/><rect x="170.72" y="65" width="1" height="3" fill="#555"/><rect x="176.56" y="61.2" width="1" height="6.8" fill="#444"/><rect x="182.40" y="65" width="1" height="3" fill="#555"/><rect x="188.25" y="65" width="1" height="3" fill="#555"/><rect x="194.09" y="65" width="1" height="3" fill="#555"/><rect x="199.93" y="65" width="1" height="3" fill="#555"/><rect x="205.77" y="65" width="1" height="3" fill="#555"/><rect x="211.62" y="65" width="1" height="3" fill="#555"/><rect x="217.46" y="65" width="1" height="3" fill="#555"/><rect x="223.30" y="65" width="1" height="3" fill="#555"/><rect x="229.15" y="65" width="1" height="3" fill="#555"/><rect x="234.99" y="61.2" width="1" height="6.8" fill="#444"/><rect x="240.83" y="65" width="1" height="3" fill="#555"/><rect x="246.68" y="65" width="1" height="3" fill="#555"/><rect x="252.52" y="65" width="1" height="3" fill="#555"/><rect x="258.36" y="65" width="1" height="3" fill="#555"/><rect x="264.20" y="65" width="1" height="3" fill="#555"/><rect x="270.05" y="65" width="1" height="3" fill="#555"/><rect x="275.89" y="65" width="1" height="3" fill="#555"/><rect x="281.73" y="65" width="1" height="3" fill="#555"/><rect x="287.58" y="65" width="1" height="3" fill="#555"/><rect x="293.42" y="61.2" width="1" height="6.8" fill="#444"/><rect x="299.26" y="65" width="1" height="3" fill="#555"/><rect x="305.11" y="65" width="1" height="3" fill="#555"/><rect x="310.95" y="65" width="1" height="3" fill="#555"/><rect x="316.79" y="65" width="1" height="3" fill="#555"/><rect x="322.63" y="65" width="1" height="3" fill="#555"/><rect x="328.48" y="65" width="1" height="3" fill="#555"/><rect x="334.32" y="65" width="1" height="3" fill="#555"/><rect x="340.16" y="65" width="1" height="3" fill="#555"/><rect x="346.01" y="65" width="1" height="3" fill="#555"/><rect x="351.85" y="61.2" width="1" height="6.8" fill="#444"/><rect x="357.69" y="65" width="1" height="3" fill="#555"/><rect x="363.54" y="65" width="1" height="3" fill="#555"/><rect x="369.38" y="65" width="1" height="3" fill="#555"/><rect x="375.22" y="65" width="1" height="3" fill="#555"/><rect x="381.06" y="65" width="1" height="3" fill="#555"/><rect x="386.91" y="65" width="1" height="3" fill="#555"/><rect x="392.75" y="65" width="1" height="3" fill="#555"/><rect x="398.59" y="65" width="1" height="3" fill="#555"/><rect x="404.44" y="65" width="1" height="3" fill="#555"/><rect x="410.28" y="61.2" width="1" height="6.8" fill="#444"/><rect x="416.12" y="65" width="1" height="3" fill="#555"/><rect x="421.97" y="65" width="1" height="3" fill="#555"/><rect x="427.81" y="65" width="1" height="3" fill="#555"/><rect x="433.65" y="65" width="1" height="3" fill="#555"/><rect x="439.49" y="65" width="1" height="3" fill="#555"/><rect x="445.34" y="65" width="1" height="3" fill="#555"/><rect x="451.18" y="65" width="1" height="3" fill="#555"/><rect x="457.02" y="65" width="1" height="3" fill="#555"/><rect x="462.87" y="65" width="1" height="3" fill="#555"/><rect x="468.71" y="61.2" width="1" height="6.8" fill="#444"/><rect x="474.55" y="65" width="1" height="3" fill="#555"/><rect x="480.40" y="65" width="1" height="3" fill="#555"/><rect x="486.24" y="65" width="1" height="3" fill="#555"/><rect x="492.08" y="65" width="1" height="3" fill="#555"/><rect x="497.93" y="65" width="1" height="3" fill="#555"/><rect x="503.77" y="65" width="1" height="3" fill="#555"/><rect x="509.61" y="65" width="1" height="3" fill="#555"/><rect x="515.45" y="65" width="1" height="3" fill="#555"/><rect x="521.30" y="65" width="1" height="3" fill="#555"/><rect x="527.14" y="61.2" width="1" height="6.8" fill="#444"/><rect x="532.98" y="65" width="1" height="3" fill="#555"/><rect x="538.83" y="65" width="1" height="3" fill="#555"/><rect x="544.67" y="65" width="1" height="3" fill="#555"/><rect x="550.51" y="65" width="1" height="3" fill="#555"/><rect x="556.36" y="65" width="1" height="3" fill="#555"/><rect x="562.20" y="65" width="1" height="3" fill="#555"/><rect x="568.04" y="65" width="1" height="3" fill="#555"/><rect x="573.88" y="65" width="1" height="3" fill="#555"/><rect x="579.73" y="65" width="1" height="3" fill="#555"/><rect x="585.57" y="61.2" width="1" height="6.8" fill="#444"/><rect x="591.41" y="65" width="1" height="3" fill="#555"/><rect x="597.26" y="65" width="1" height="3" fill="#555"/><rect x="603.10" y="65" width="1" height="3" fill="#555"/><rect x="608.94" y="65" width="1" height="3" fill="#555"/><rect x="614.79" y="65" width="1" height="3" fill="#555"/><rect x="620.63" y="65" width="1" height="3" fill="#555"/><rect x="626.47" y="65" width="1" height="3" fill="#555"/><rect x="632.31" y="65" width="1" height="3" fill="#555"/><rect x="638.16" y="65" width="1" height="3" fill="#555"/><rect x="644.00" y="61.2" width="1" height="6.8" fill="#444"/><rect x="649.84" y="65" width="1" height="3" fill="#555"/><rect x="39.40" y="60" width="18.30" height="8" fill="#f0f0f0"/><rect x="102.28" y="60" width="13.85" height="8" fill="#f0f0f0"/><rect x="160.71" y="60" width="13.85" height="8" fill="#f0f0f0"/><rect x="219.14" y="60" width="13.85" height="8" fill="#f0f0f0"/><rect x="277.57" y="60" width="13.85" height="8" fill="#f0f0f0"/><rect x="344.90" y="60" width="4.95" height="8" fill="#f0f0f0"/><rect x="394.43" y="60" width="13.85" height="8" fill="#f0f0f0"/><rect x="452.86" y="60" width="13.85" height="8" fill="#f0f0f0"/><rect x="511.29" y="60" width="13.85" height="8" fill="#f0f0f0"/><rect x="569.72" y="60" width="13.85" height="8" fill="#f0f0f0"/><rect x="623.70" y="60" width="18.30" height="8" fill="#f0f0f0"/><text x="57.70" y="67" text-anchor="end" font-size="8" fill="#111" stroke="#f0f0f0" stroke-width="0">1000</text><text x="116.13" y="67" text-anchor="end" font-size="8" fill="#111" stroke="#f0f0f0" stroke-width="0">800</text><text x="174.56" y="67" text-anchor="end" font-size="8" fill="#111" stroke="#f0f0f0" stroke-width="0">600</text><text x="232.99" y="67" text-anchor="end" font-size="8" fill="#111" stroke="#f0f0f0" stroke-width="0">400</text><text x="291.42" y="67" text-anchor="end" font-size="8" fill="#111" stroke="#f0f0f0" stroke-width="0">200</text><text x="349.85" y="67" text-anchor="end" font-size="8" fill="#111" stroke="#f0f0f0" stroke-width="0">0</text><text x="408.28" y="67" text-anchor="end" font-size="8" fill="#111" stroke="#f0f0f0" stroke-width="0">200</text><text x="466.71" y="67" text-anchor="end" font-size="8" fill="#111" stroke="#f0f0f0" stroke-width="0">400</text><text x="525.14" y="67" text-anchor="end" font-size="8" fill="#111" stroke="#f0f0f0" stroke-width="0">600</text><text x="583.57" y="67" text-anchor="end" font-size="8" fill="#111" stroke="#f0f0f0" stroke-width="0">800</text><text x="642.00" y="67" text-anchor="end" font-size="8" fill="#111" stroke="#f0f0f0" stroke-width="0">1000</text><text x="655.5" y="67" font-size="7.6" fill="#111">mm</text></g>
</svg>
<!-- ===== LEFT TOOLBARS ===== -->
<div class="a" style="left:17px;top:59px;width:1px;height:296px;background:#d0d0d0"></div>
<div class="a" style="left:35px;top:59px;width:1px;height:322px;background:#d8d8d8"></div>
<svg class="a" style="left:0;top:58px" width="44" height="324" viewBox="0 58 44 324">
 <g fill="none" stroke-linejoin="round">
 <rect x="0" y="61" width="17" height="1" fill="#fff"/><rect x="0" y="62" width="17" height="1" fill="#d8d8d8"/>
 <rect x="18.5" y="61" width="16.5" height="1" fill="#fff"/><rect x="18.5" y="62" width="16.5" height="1" fill="#d8d8d8"/>
 <!-- pressed select -->
 <rect x="1" y="64.5" width="15.8" height="15.3" rx="1.5" fill="#e2e2e2" stroke="#7c7c7c" stroke-width="1"/>
 <rect x="4" y="68" width="10" height="9" stroke="#0000e0" stroke-width="1"/>
 <g stroke="#e02020" stroke-width=".8" fill="#fff"><circle cx="4" cy="72.5" r="1"/><circle cx="14" cy="72.5" r="1"/><circle cx="9" cy="68" r="1"/><circle cx="9" cy="77" r="1"/></g>
 <g fill="#0000c0"><rect x="3" y="67" width="2" height="2"/><rect x="13" y="67" width="2" height="2"/><rect x="3" y="76" width="2" height="2"/><rect x="13" y="76" width="2" height="2"/></g>
 <rect x="8.3" y="71.8" width="1.6" height="1.6" fill="#40e040"/>
 <!-- angle -->
 <path d="M2 95 L6.5 86.5 L13 83 M6.5 86.5 L13.5 92" stroke="#1030ff" stroke-width="1.2"/>
 <rect x="5" y="85" width="3" height="3" fill="#ff1010"/>
 <path d="M11 90 L10 93 L13 92" stroke="#1030ff" stroke-width=".8"/>
 <!-- abc -->
 <text x="1.5" y="110" font-family="Liberation Sans" font-weight="bold" font-size="8.5" fill="#107010" stroke="none">abc</text>
 <rect x="2" y="111" width="13" height="1.4" fill="#2040d0"/>
 <!-- octagon -->
 <path d="M6.5 118.5 H11.5 L15 122 V126 L11.5 129.5 H6.5 L3 126 V122 Z" stroke="#ee1010" stroke-width="1.3" fill="#fff"/>
 <rect x="6" y="121.5" width="6" height="5" stroke="#1818c0" stroke-width="1.2" fill="#c8d0ff"/>
 <!-- eraser -->
 <path d="M3 134.5 V146.5 H8 Z" fill="#00e8f0"/>
 <path d="M4.5 138.5 L9 134.5 L15 140 L10.5 144.5 Z" fill="#f8f060" stroke="#1a1a80" stroke-width="1"/>
 <path d="M7 141 L11.5 136.8" stroke="#1a1a80" stroke-width=".8"/>
 <!-- brush folder -->
 <path d="M2.5 155 H10 L12 161 H3 Z" fill="#e0a020" stroke="#705010" stroke-width=".7"/>
 <path d="M7 157 L14 150 L16 152 L9 158 Z" fill="#3050e0" stroke="#202080" stroke-width=".6"/>
 <!-- green cone -->
 <path d="M9 168 L11 172 L15 176 H3 L7 172 Z" fill="#10c010" stroke="#107010" stroke-width=".8"/>
 <rect x="7.5" y="176" width="3" height="3" fill="#10a010"/>
 <!-- mill -->
 <rect x="7.5" y="184" width="3.5" height="13" fill="#e8e8e8" stroke="#555" stroke-width=".8"/>
 <path d="M7.5 188 L11 190 M7.5 191 L11 193 M7.5 194 L11 196" stroke="#555" stroke-width=".6"/>
 <path d="M3 193 L5 195 M5 193 L3 195 M13.5 193 L15.5 195 M15.5 193 L13.5 195" stroke="#ff3030" stroke-width=".7"/>
 <rect x="0" y="202.5" width="17" height="1" fill="#c8c8c8"/><rect x="0" y="203.5" width="17" height="1" fill="#fff"/>
 <!-- magnifiers -->
 <rect x="3" y="208" width="5" height="4.5" stroke="#333" stroke-width=".8"/>
 <circle cx="8" cy="212" r="2.8" stroke="#1a60e0" stroke-width="1.2" fill="#c8e8ff"/><path d="M10 214 L12 216" stroke="#c020c0" stroke-width="1.3"/>
 <circle cx="7" cy="227" r="3" stroke="#1a60e0" stroke-width="1.3" fill="#c8e8ff"/><path d="M9.2 229.2 L11.5 231.5" stroke="#c020c0" stroke-width="1.4"/><path d="M10 224 H12" stroke="#333" stroke-width=".7"/>
 <circle cx="7" cy="242.5" r="3" stroke="#1a60e0" stroke-width="1.3" fill="#c8e8ff"/><path d="M9.2 244.7 L11.5 247" stroke="#c020c0" stroke-width="1.4"/><path d="M10.5 239 L12 240.5" stroke="#333" stroke-width=".7"/>
 <path d="M4 255 H8 M4 263 H11 M6 257 L10 261" stroke="#c0c0c0" stroke-width="1.1"/><circle cx="7.5" cy="258.5" r="2.5" stroke="#c0c0c0" stroke-width="1"/>
 <ellipse cx="7.5" cy="275" rx="5" ry="3.3" fill="#1a40d0" stroke="#102080" stroke-width=".6"/><ellipse cx="8" cy="275.5" rx="2.3" ry="1.7" fill="#40c0f0"/>
 <circle cx="7" cy="290.5" r="3" stroke="#1a80e0" stroke-width="1.3" fill="#c8f0ff"/><path d="M4 294 L3 296 M10 294 L11 296" stroke="#e020e0" stroke-width="1.3"/>
 <rect x="0" y="300" width="17" height="1" fill="#c8c8c8"/><rect x="0" y="301" width="17" height="1" fill="#fff"/>
 <path d="M8 306 V317 M2.5 311.5 H13.5" stroke="#222" stroke-width="1.1"/>
 <path d="M6.5 307.5 L8 306 L9.5 307.5 M6.5 315.5 L8 317 L9.5 315.5 M4 310 L2.5 311.5 L4 313 M12 310 L13.5 311.5 L12 313" stroke="#222" stroke-width="1"/>
 <circle cx="7" cy="326.5" r="3.8" stroke="#222" stroke-width="1.1"/><path d="M9.8 329.3 L12.5 332" stroke="#1a60e0" stroke-width="1.6"/><path d="M7 324.5 V328" stroke="#222" stroke-width=".8"/>
 <path d="M4 341 Q6 338 10 339 M12 346 Q10 349 6 348" stroke="#222" stroke-width="1.1"/><path d="M10 337.5 L11.5 340 L9 340.8 M6 349.5 L4.5 347 L7 346.2" stroke="#222" stroke-width=".9"/>
 <path d="M17 355 H0" stroke="#c8c8c8" stroke-width="1"/>
 <!-- col 2 -->
 <circle cx="26" cy="70.5" r="3.2" fill="#108810" stroke="#0a500a" stroke-width=".6"/><rect x="24.8" y="73" width="2.4" height="3" fill="#404040"/>
 <circle cx="26" cy="86.3" r="3.2" fill="#f0f020" stroke="#505010" stroke-width=".6"/><rect x="24.8" y="89" width="2.4" height="3" fill="#404040"/>
 <path d="M22.5 100 L24.5 107 L25.5 104.5 L28 106" stroke="#c8c8c8" stroke-width="1"/><circle cx="28.5" cy="101.5" r="2.2" stroke="#c8c8c8" stroke-width=".9"/>
 <circle cx="24" cy="116.5" r="1.6" fill="#555"/><circle cx="28.5" cy="121" r="1.8" fill="#f0e020" stroke="#444" stroke-width=".5"/>
 <path d="M22 121 H26 M26 116.5 H31 M29 115 L31 116.5 L29 118 M24 119.5 L22 121 L24 122.5" stroke="#222" stroke-width=".9"/>
 <path d="M22.5 134 L26 131.5 H30 V137 H26 Z" stroke="#c8c8c8" stroke-width=".9"/>
 <path d="M22.5 150 L26 147.5 H30 V153 H26 Z" stroke="#c8c8c8" stroke-width=".9"/>
 <rect x="18.5" y="160" width="16.5" height="1" fill="#c8c8c8"/><rect x="18.5" y="161" width="16.5" height="1" fill="#fff"/>
 <path d="M23 167 L26 165 V176 L23 178 Z M26 165 L29 167 V178 L26 176 M29 167 L31 166 V176 L29 178" stroke="#2a40c0" stroke-width=".9" fill="#dfe6ff"/>
 <rect x="22" y="183" width="9" height="1.3" fill="#702070"/><rect x="22" y="191" width="9" height="1.3" fill="#702070"/>
 <path d="M22.5 186 H31 M22.5 188.5 H31" stroke="#702070" stroke-width=".8" stroke-dasharray="1 1"/>
 <path d="M22 198 L26 204 L30 198 M24 201 H28" stroke="#c8c8c8" stroke-width="1"/>
 <rect x="18.5" y="213" width="16.5" height="1" fill="#c8c8c8"/>
 </g>
 <!-- vertical ruler -->
 <rect x="36" y="68" width="8" height="313" fill="#f0f0f0"/>
 <g id="vticks"><rect x="41" y="72.55" width="3" height="1" fill="#555"/><rect x="41" y="78.44" width="3" height="1" fill="#555"/><rect x="41" y="84.33" width="3" height="1" fill="#555"/><rect x="41" y="90.22" width="3" height="1" fill="#555"/><rect x="41" y="96.11" width="3" height="1" fill="#555"/><rect x="37" y="102.00" width="7" height="1" fill="#666"/><rect x="41" y="107.89" width="3" height="1" fill="#555"/><rect x="41" y="113.78" width="3" height="1" fill="#555"/><rect x="41" y="119.67" width="3" height="1" fill="#555"/><rect x="41" y="125.56" width="3" height="1" fill="#555"/><rect x="41" y="131.45" width="3" height="1" fill="#555"/><rect x="41" y="137.34" width="3" height="1" fill="#555"/><rect x="41" y="143.23" width="3" height="1" fill="#555"/><rect x="41" y="149.12" width="3" height="1" fill="#555"/><rect x="41" y="155.01" width="3" height="1" fill="#555"/><rect x="37" y="160.90" width="7" height="1" fill="#666"/><rect x="41" y="166.79" width="3" height="1" fill="#555"/><rect x="41" y="172.68" width="3" height="1" fill="#555"/><rect x="41" y="178.57" width="3" height="1" fill="#555"/><rect x="41" y="184.46" width="3" height="1" fill="#555"/><rect x="41" y="190.35" width="3" height="1" fill="#555"/><rect x="41" y="196.24" width="3" height="1" fill="#555"/><rect x="41" y="202.13" width="3" height="1" fill="#555"/><rect x="41" y="208.02" width="3" height="1" fill="#555"/><rect x="41" y="213.91" width="3" height="1" fill="#555"/><rect x="37" y="219.80" width="7" height="1" fill="#666"/><rect x="41" y="225.69" width="3" height="1" fill="#555"/><rect x="41" y="231.58" width="3" height="1" fill="#555"/><rect x="41" y="237.47" width="3" height="1" fill="#555"/><rect x="41" y="243.36" width="3" height="1" fill="#555"/><rect x="41" y="249.25" width="3" height="1" fill="#555"/><rect x="41" y="255.14" width="3" height="1" fill="#555"/><rect x="41" y="261.03" width="3" height="1" fill="#555"/><rect x="41" y="266.92" width="3" height="1" fill="#555"/><rect x="41" y="272.81" width="3" height="1" fill="#555"/><rect x="37" y="278.70" width="7" height="1" fill="#666"/><rect x="41" y="284.59" width="3" height="1" fill="#555"/><rect x="41" y="290.48" width="3" height="1" fill="#555"/><rect x="41" y="296.37" width="3" height="1" fill="#555"/><rect x="41" y="302.26" width="3" height="1" fill="#555"/><rect x="41" y="308.15" width="3" height="1" fill="#555"/><rect x="41" y="314.04" width="3" height="1" fill="#555"/><rect x="41" y="319.93" width="3" height="1" fill="#555"/><rect x="41" y="325.82" width="3" height="1" fill="#555"/><rect x="41" y="331.71" width="3" height="1" fill="#555"/><rect x="37" y="337.60" width="7" height="1" fill="#666"/><rect x="41" y="343.49" width="3" height="1" fill="#555"/><rect x="41" y="349.38" width="3" height="1" fill="#555"/><rect x="41" y="355.27" width="3" height="1" fill="#555"/><rect x="41" y="361.16" width="3" height="1" fill="#555"/><rect x="41" y="367.05" width="3" height="1" fill="#555"/><rect x="41" y="372.94" width="3" height="1" fill="#555"/><rect x="41" y="378.83" width="3" height="1" fill="#555"/><rect x="38" y="72.50" width="6" height="10" fill="#f0f0f0"/><text x="39.2" y="80.00" font-family="Liberation Sans" font-weight="bold" font-size="7.6" fill="#111">4</text><rect x="38" y="81.75" width="6" height="10" fill="#f0f0f0"/><text x="39.2" y="89.25" font-family="Liberation Sans" font-weight="bold" font-size="7.6" fill="#111">0</text><rect x="38" y="91.00" width="6" height="10" fill="#f0f0f0"/><text x="39.2" y="98.50" font-family="Liberation Sans" font-weight="bold" font-size="7.6" fill="#111">0</text><rect x="38" y="131.40" width="6" height="10" fill="#f0f0f0"/><text x="39.2" y="138.90" font-family="Liberation Sans" font-weight="bold" font-size="7.6" fill="#111">2</text><rect x="38" y="140.65" width="6" height="10" fill="#f0f0f0"/><text x="39.2" y="148.15" font-family="Liberation Sans" font-weight="bold" font-size="7.6" fill="#111">0</text><rect x="38" y="149.90" width="6" height="10" fill="#f0f0f0"/><text x="39.2" y="157.40" font-family="Liberation Sans" font-weight="bold" font-size="7.6" fill="#111">0</text><rect x="38" y="208.80" width="6" height="10" fill="#f0f0f0"/><text x="39.2" y="216.30" font-family="Liberation Sans" font-weight="bold" font-size="7.6" fill="#111">0</text><rect x="38" y="249.20" width="6" height="10" fill="#f0f0f0"/><text x="39.2" y="256.70" font-family="Liberation Sans" font-weight="bold" font-size="7.6" fill="#111">2</text><rect x="38" y="258.45" width="6" height="10" fill="#f0f0f0"/><text x="39.2" y="265.95" font-family="Liberation Sans" font-weight="bold" font-size="7.6" fill="#111">0</text><rect x="38" y="267.70" width="6" height="10" fill="#f0f0f0"/><text x="39.2" y="275.20" font-family="Liberation Sans" font-weight="bold" font-size="7.6" fill="#111">0</text><rect x="38" y="308.10" width="6" height="10" fill="#f0f0f0"/><text x="39.2" y="315.60" font-family="Liberation Sans" font-weight="bold" font-size="7.6" fill="#111">4</text><rect x="38" y="317.35" width="6" height="10" fill="#f0f0f0"/><text x="39.2" y="324.85" font-family="Liberation Sans" font-weight="bold" font-size="7.6" fill="#111">0</text><rect x="38" y="326.60" width="6" height="10" fill="#f0f0f0"/><text x="39.2" y="334.10" font-family="Liberation Sans" font-weight="bold" font-size="7.6" fill="#111">0</text><rect x="38" y="367.00" width="6" height="10" fill="#f0f0f0"/><text x="39.2" y="374.50" font-family="Liberation Sans" font-weight="bold" font-size="7.6" fill="#111">6</text><rect x="38" y="376.25" width="6" height="10" fill="#f0f0f0"/><text x="39.2" y="383.75" font-family="Liberation Sans" font-weight="bold" font-size="7.6" fill="#111">0</text></g>
</svg>
<!-- ===== RIGHT PANEL ===== -->
<div class="a" style="left:672px;top:59px;width:84px;height:322px;background:#f0f0f0"></div>
<div class="a" style="left:673px;top:65px;width:63px;height:1px;background:#c8c8c8"></div>
<div class="a" style="left:673px;top:66px;width:63px;height:1px;background:#fff"></div>
<div class="a" style="left:673px;top:68px;width:63px;height:1px;background:#c8c8c8"></div>
<div class="a" style="left:673px;top:69px;width:63px;height:1px;background:#fff"></div>
<svg class="a" style="left:738px;top:62px" width="16" height="8" viewBox="738 62 16 8">
 <rect x="739.5" y="63" width="6" height="6" fill="#f4f4f4" stroke="#999" stroke-width=".8"/>
 <rect x="741" y="64.5" width="3" height="2.5" fill="none" stroke="#222" stroke-width=".8"/>
 <rect x="746.5" y="63" width="6" height="6" fill="#f4f4f4" stroke="#999" stroke-width=".8"/>
 <path d="M748 64.5 L751 67.5 M751 64.5 L748 67.5" stroke="#222" stroke-width=".9"/>
</svg>
<!-- tab -->
<div class="a" style="left:672px;top:85.5px;width:83px;height:1px;background:#a8b0c0"></div>
<div class="a" style="left:672px;top:73px;width:18.5px;height:13.5px;background:#fff;border:1px solid #a8b0c0;border-bottom:none"></div>
<svg class="a" style="left:674px;top:74px" width="10" height="10" viewBox="674 74 10 10">
 <rect x="675.5" y="75.5" width="6" height="6" fill="#fff" stroke="#2030c0" stroke-width="1.2"/>
 <g fill="#e02020"><rect x="677.8" y="74.8" width="1.5" height="1.5"/><rect x="677.8" y="80.8" width="1.5" height="1.5"/><rect x="674.8" y="77.8" width="1.5" height="1.5"/><rect x="680.8" y="77.8" width="1.5" height="1.5"/></g>
 <g fill="#1010a0"><rect x="674.8" y="74.8" width="1.6" height="1.6"/><rect x="680.8" y="74.8" width="1.6" height="1.6"/><rect x="674.8" y="80.8" width="1.6" height="1.6"/><rect x="680.8" y="80.8" width="1.6" height="1.6"/></g>
</svg>
<div class="a" style="left:672px;top:86.5px;width:83px;height:294px;background:#f0f0f0;border-right:1px solid #fff"></div>
<div class="t" style="left:675.5px;top:94.6px;font-size:6.5px;color:#222;transform:scaleX(.9);transform-origin:0 0">Nudge dist.</div>
<div class="t" style="left:675.5px;top:105.8px;font-size:6.5px;color:#222;transform:scaleX(.9);transform-origin:0 0">Angle Incr.</div>
<div class="a" style="left:716px;top:91px;width:24px;height:10.5px;background:#fff;border:1px solid #e4e4e4"></div>
<div class="a" style="left:716px;top:102.5px;width:24px;height:10.5px;background:#fff;border:1px solid #e4e4e4"></div>
<div class="t" style="left:717.5px;top:94px;font-size:6.5px;color:#222;transform:scaleX(.92);transform-origin:0 0">200.00I</div>
<div class="t" style="left:717.5px;top:105.4px;font-size:6.5px;color:#222;transform:scaleX(.92);transform-origin:0 0">90.000</div>
<div class="a" style="left:677.5px;top:117.5px;width:35.5px;height:11.5px;border:1px solid #3c9ee8;border-radius:1.5px;background:linear-gradient(#eef2f6,#dde3ea)"></div>
<div class="a" style="left:715.5px;top:117.5px;width:35.5px;height:11.5px;border:1px solid #a0a0a0;border-radius:1.5px;background:linear-gradient(#f4f4f4,#dedede)"></div>
<div class="a" style="left:677.5px;top:132px;width:35.5px;height:11.5px;border:1px solid #a0a0a0;border-radius:1.5px;background:linear-gradient(#f4f4f4,#dedede)"></div>
<div class="a" style="left:715.5px;top:132px;width:35.5px;height:11.5px;border:1px solid #a0a0a0;border-radius:1.5px;background:linear-gradient(#f4f4f4,#dedede)"></div>
<div class="a" style="left:677.5px;top:146.5px;width:35.5px;height:11.5px;border:1px solid #a0a0a0;border-radius:1.5px;background:linear-gradient(#f4f4f4,#dedede)"></div>
<div class="a" style="left:715.5px;top:146.5px;width:35.5px;height:11.5px;border:1px solid #a0a0a0;border-radius:1.5px;background:linear-gradient(#f4f4f4,#dedede)"></div>
<div class="t" style="left:682.6px;top:120.1px;font-size:6.3px;color:#222;transform:scaleX(.95);transform-origin:0 0">[Q]Select</div>
<div class="t" style="left:722.7px;top:120.1px;font-size:6.3px;color:#222;transform:scaleX(.95);transform-origin:0 0">[R]Lock</div>
<div class="t" style="left:681.2px;top:134.8px;font-size:6.3px;color:#222;transform:scaleX(.95);transform-origin:0 0">[W]Display</div>
<div class="t" style="left:722.7px;top:134.8px;font-size:6.3px;color:#222;transform:scaleX(.95);transform-origin:0 0">[T]Order</div>
<div class="t" style="left:685px;top:149.2px;font-size:6.3px;color:#222;transform:scaleX(.95);transform-origin:0 0">[E]Layer</div>
<div class="t" style="left:722.7px;top:149.2px;font-size:6.3px;color:#222;transform:scaleX(.95);transform-origin:0 0">[Y]Align</div>
<div class="a" style="left:673px;top:162px;width:82px;height:1px;background:#c8c8c8"></div>
<div class="a" style="left:673px;top:163px;width:82px;height:1px;background:#fff"></div>
<!-- palette column -->
<div class="a" style="left:756px;top:59px;width:12px;height:322px;background:#f0f0f0"></div>
<svg class="a" style="left:756px;top:59px" width="12" height="322" viewBox="756 59 12 322">
 <rect x="757" y="60" width="11" height="11" fill="#e4e4e4" stroke="#b4b4b4" stroke-width=".8"/>
 <path d="M759 69 L765 61.5 L766.5 63 L760.5 70 Z" fill="#f0d040" stroke="#333" stroke-width=".7"/>
 <rect x="757.5" y="73" width="10" height="9.5" fill="#fff" stroke="#333" stroke-width=".9"/>
 <path d="M758 73.5 L767 82 M767 73.5 L758 82" stroke="#333" stroke-width=".8"/>
 <rect x="757" y="83.5" width="11" height="9.5" fill="#d8d8d8" stroke="#b4b4b4" stroke-width=".6"/>
 <path d="M759 91 L765.5 85" stroke="#222" stroke-width="1.2"/><path d="M758 92 H763" stroke="#1010e0" stroke-width="1.3"/>
 <rect x="757.5" y="94" width="10" height="9.5" fill="#706040" stroke="#444" stroke-width=".6"/>
 <path d="M758.5 102 L766.5 95 M760 96 L766 102" stroke="#e0e040" stroke-width="1.3"/><path d="M759 99 L762 96" stroke="#e030e0" stroke-width="1"/>
 <rect x="757.5" y="104.5" width="10" height="10" fill="#ffc0c8" stroke="#999" stroke-width=".6"/>
 <rect x="757" y="116" width="11" height="9.5" fill="#f0f0f0" stroke="#d0d0d0" stroke-width=".7"/>
 <path d="M760.5 122 L762.5 119.5 L764.5 122" fill="none" stroke="#c0c0c0" stroke-width=".8"/>
 <rect x="757" y="126.5" width="11" height="9.5" fill="#f4f4f4" stroke="#d8d8d8" stroke-width=".7"/>
 <path d="M760.5 130 H764.5 L762.5 132.5 Z" fill="#111"/>
 <g stroke="#6a6a6a" stroke-width=".8" id="swatches"><rect x="757.8" y="138.50" width="9.6" height="9.80" fill="#ff0000"/><rect x="757.8" y="149.80" width="9.6" height="9.80" fill="#ffff00"/><rect x="757.8" y="161.10" width="9.6" height="9.80" fill="#0000ff"/><rect x="757.8" y="172.40" width="9.6" height="9.80" fill="#00ff00"/><rect x="757.8" y="183.70" width="9.6" height="9.80" fill="#00ffff"/><rect x="757.8" y="195.00" width="9.6" height="9.80" fill="#ff00ff"/><rect x="757.8" y="206.30" width="9.6" height="9.80" fill="#ffffff"/><rect x="757.8" y="217.60" width="9.6" height="9.80" fill="#000000"/><rect x="757.8" y="228.90" width="9.6" height="9.80" fill="#c0c0c0"/><rect x="757.8" y="240.20" width="9.6" height="9.80" fill="#ff6820"/><rect x="757.8" y="251.50" width="9.6" height="9.80" fill="#b02828"/><rect x="757.8" y="262.80" width="9.6" height="9.80" fill="#ffc0cc"/><rect x="757.8" y="274.10" width="9.6" height="9.80" fill="#3cb371"/><rect x="757.8" y="285.40" width="9.6" height="9.80" fill="#2e8b8b"/><rect x="757.8" y="296.70" width="9.6" height="9.80" fill="#ffd700"/><rect x="757.8" y="308.00" width="9.6" height="9.80" fill="#f4a460"/><rect x="757.8" y="319.30" width="9.6" height="9.80" fill="#808000"/><rect x="757.8" y="330.60" width="9.6" height="9.80" fill="#800000"/><rect x="757.8" y="341.90" width="9.6" height="9.80" fill="#000080"/><rect x="757.8" y="353.20" width="9.6" height="9.80" fill="#008000"/><rect x="757.8" y="364.50" width="9.6" height="9.80" fill="#008080"/><rect x="757.8" y="375.80" width="9.6" height="5.20" fill="#800080"/></g>
</svg>
<!-- ===== SCROLL ARROWS ===== -->
<svg class="a" style="left:44px;top:68px" width="627" height="314" viewBox="44 68 627 314">
 <path d="M661 75 L663.2 72.5 L665.4 75 Z" fill="#909090"/>
 <path d="M661 366 L663.2 368.5 L665.4 366 Z" fill="#909090"/>
 <path d="M50.5 374.5 L48 376.7 L50.5 379 Z" fill="#909090"/>
 <path d="M653 374.5 L655.5 376.7 L653 379 Z" fill="#909090"/>
</svg>
<!-- ===== BOTTOM TOOLBAR ===== -->
<svg class="a" style="left:0;top:381px" width="370" height="19" viewBox="0 381 370 19">
 <g fill="none" stroke-linejoin="round">
 <rect x="1.5" y="383" width="1" height="15" fill="#c4c4c4"/>
 <g fill="#e6e6e6" stroke="#8a8a8a" stroke-width="1">
  <rect x="4.5" y="383.5" width="15.5" height="14" rx="1.5"/>
  <rect x="37" y="383.5" width="15.5" height="14" rx="1.5"/>
  <rect x="53.5" y="383.5" width="15.5" height="14" rx="1.5"/>
  <rect x="70" y="383.5" width="15.5" height="14" rx="1.5"/>
  <rect x="86.5" y="383.5" width="15.5" height="14" rx="1.5"/>
  <rect x="139" y="383.5" width="15.5" height="14" rx="1.5"/>
  <rect x="155.5" y="383.5" width="15.5" height="14" rx="1.5"/>
 </g>
 <!-- icons -->
 <path d="M8.5 393.5 L15.5 387" stroke="#333" stroke-width="1"/><circle cx="8.5" cy="393.5" r="1" fill="#10a0a0"/><circle cx="15" cy="387.5" r="1" fill="#10a0a0"/>
 <path d="M23.5 392 L31 385 M25 387 L32 393" stroke="#333" stroke-width=".9"/><path d="M24 390 L27 389.5 L26 392 Z" fill="#2020e0"/><path d="M29.5 384.5 L30.5 387 L33 386" stroke="#2020e0" stroke-width="1"/><circle cx="28" cy="388.5" r="1" fill="#10a0a0"/>
 <path d="M40.5 387 H45 Q47.5 387.5 47.5 392" stroke="#333" stroke-width="1"/><circle cx="46" cy="388.5" r="1.1" fill="#f0a020"/>
 <path d="M56.5 386 L66 395 M66 386 L56.5 395" stroke="#333" stroke-width="1"/><circle cx="61.3" cy="390.5" r="1.1" fill="#10b0b0"/>
 <path d="M73.5 395 V387 H77 Q81 387 81 392 V395" stroke="#333" stroke-width="1"/><circle cx="75" cy="394.5" r="1" fill="#10a0a0"/>
 <path d="M94.3 386 L99 390.7 L94.3 395.4 L89.6 390.7 Z" stroke="#d03030" stroke-width="1.3"/><g fill="#b02020"><circle cx="94.3" cy="386" r="1"/><circle cx="99" cy="390.7" r="1"/><circle cx="94.3" cy="395.4" r="1"/><circle cx="89.6" cy="390.7" r="1"/></g>
 <path d="M110.5 385.5 V394.5 M106 394.5 H115" stroke="#333" stroke-width="1"/><circle cx="110.5" cy="394.5" r="1" fill="#10a0a0"/>
 <path d="M113 394.5 H110" stroke="#10a0a0" stroke-width="1"/>
 <path d="M121 387 Q126 386 128 390 Q130 393 132 395 M124 394 L128 389" stroke="#333" stroke-width="1"/><circle cx="126.5" cy="388.5" r="1" fill="#e02050"/>
 <rect x="137" y="384" width="1" height="13.5" fill="#b0b0b0"/>
 <circle cx="146.7" cy="390.5" r="2.3" fill="#3080e0" stroke="#1a1a80" stroke-width=".7"/><path d="M144.5 388.3 L149 392.7 M149 388.3 L144.5 392.7" stroke="#fff" stroke-width=".6"/>
 <path d="M163 391 V385.5 M163 391 L159.5 394 M163 391 L167 394" stroke="#333" stroke-width=".8"/><circle cx="163" cy="391" r="1" fill="#e02020"/><path d="M164.5 385 L166 386.5" stroke="#333" stroke-width=".8"/>
 <rect x="172" y="384" width="1" height="13.5" fill="#b0b0b0"/>
 <g stroke="#333" stroke-width=".9">
  <path d="M182 384.5 L188 390.5 L182 396.5 L176 390.5 Z M179 387.5 L185 393.5 M185 387.5 L179 393.5"/>
  <path d="M198 384.5 L204 390.5 L198 396.5 L192 390.5 Z M195 387.5 L201 393.5 M201 387.5 L195 393.5"/>
  <path d="M215 384.5 L221 390.5 L215 396.5 L209 390.5 Z M212 387.5 L218 393.5 M218 387.5 L212 393.5"/>
 </g>
 <circle cx="179.5" cy="388" r="1.2" fill="#e020c0"/><circle cx="200.5" cy="388" r="1.2" fill="#e020c0"/><circle cx="215" cy="390.5" r="1.2" fill="#e020c0"/>
 <rect x="224.5" y="384" width="1" height="13.5" fill="#b0b0b0"/>
 <path d="M230 394.5 L233 391 H240 L237 394.5 Z" fill="#707070"/><path d="M233.5 391 V386" stroke="#333" stroke-width=".8"/><circle cx="239" cy="392" r="1" fill="#e03030"/>
 <path d="M246 394.5 L249 391 H256.5 L253.5 394.5 Z" fill="#707070"/><path d="M250 391 V385 M250 390 L255 386" stroke="#2030e0" stroke-width=".8"/><circle cx="250.5" cy="391.5" r="1" fill="#e020c0"/>
 <rect x="261" y="384" width="1" height="13.5" fill="#b0b0b0"/>
 <path d="M266.5 387.5 L270 395 L271 392 L274 392.5 Z" fill="#222"/><path d="M270 384.5 L276 390 M276 384.5 L270 390" stroke="#888" stroke-width=".8"/><circle cx="273" cy="387.3" r="1" fill="#f0a020"/>
 <path d="M283 387.5 L286.5 395 L287.5 392 L290.5 392.5 Z" fill="#222"/><path d="M287.5 384.5 L291.5 388.5 M291.5 384.5 L287.5 388.5" stroke="#e01010" stroke-width="1.2"/>
 <rect x="297" y="384" width="1" height="13.5" fill="#b0b0b0"/>
 <path d="M301.5 393 L305 389 H311.5 L308 393 Z" stroke="#333" stroke-width=".9"/><path d="M306 390 V385" stroke="#e03030" stroke-width=".9"/><path d="M309 385 V389" stroke="#2030e0" stroke-width=".9"/><circle cx="305.5" cy="394" r="1" fill="#e020c0"/>
 <path d="M317.5 395 L327 385.5" stroke="#555" stroke-width=".9"/><path d="M319 387 L322 390" stroke="#2030e0" stroke-width=".9"/><circle cx="320" cy="393" r="1" fill="#e020c0"/><circle cx="325" cy="387.5" r="1" fill="#f0a020"/>
 <path d="M334 385 L339 390 M339 385 L334 390" stroke="#888" stroke-width=".8"/><rect x="338.5" y="388" width="5.5" height="6.5" fill="#ddd" stroke="#555" stroke-width=".8"/><circle cx="336.5" cy="387.5" r="1" fill="#f0a020"/>
 <path d="M351.5 386 L359.5 394 M359.5 386 L351.5 394" stroke="#e00000" stroke-width="2.2"/>
 <rect x="365" y="383" width="1" height="15" fill="#c0c0c0"/>
 </g>
</svg>
<!-- ===== TASKBAR ===== -->
<svg class="a" style="left:0;top:410px" width="768" height="24" viewBox="0 410 768 24">
 <defs>
  <linearGradient id="tbg" x1="0" x2="1" y1="0" y2="0">
   <stop offset="0" stop-color="#1c2b48"/><stop offset=".37" stop-color="#213252"/>
   <stop offset=".40" stop-color="#2c3e64"/><stop offset=".43" stop-color="#52588a"/>
   <stop offset=".50" stop-color="#62649a"/><stop offset=".60" stop-color="#606290"/>
   <stop offset=".66" stop-color="#5c5e8e"/><stop offset=".72" stop-color="#6c6a98"/>
   <stop offset=".80" stop-color="#4c5480"/><stop offset=".86" stop-color="#384670"/><stop offset="1" stop-color="#2c3a62"/>
  </linearGradient>
  <filter id="blr" x="-20%" y="-50%" width="140%" height="200%"><feGaussianBlur stdDeviation="2.2"/></filter>
  <linearGradient id="btn1" x1="0" x2="0" y1="0" y2="1"><stop offset="0" stop-color="#56657f"/><stop offset=".5" stop-color="#3f4e6a"/><stop offset="1" stop-color="#2f3e5a"/></linearGradient>
  <linearGradient id="btn2" x1="0" x2="0" y1="0" y2="1"><stop offset="0" stop-color="#a0acbc"/><stop offset=".45" stop-color="#7d8a9e"/><stop offset="1" stop-color="#5d6a80"/></linearGradient>
  <radialGradient id="orb" cx=".5" cy=".45" r=".6"><stop offset="0" stop-color="#a0d8f4"/><stop offset=".6" stop-color="#3a88c8"/><stop offset="1" stop-color="#143c70"/></radialGradient>
 </defs>
 <rect x="0" y="410.5" width="768" height="1" fill="#e8e8ee"/>
 <rect x="0" y="411.5" width="768" height="22.5" fill="url(#tbg)"/>
 <g filter="url(#blr)" fill="#343e66" opacity=".85">
  <ellipse cx="365" cy="422" rx="14" ry="6"/><ellipse cx="410" cy="418" rx="9" ry="5"/><ellipse cx="445" cy="424" rx="12" ry="6"/>
  <ellipse cx="500" cy="428" rx="16" ry="7"/><ellipse cx="590" cy="430" rx="22" ry="6"/><ellipse cx="640" cy="420" rx="25" ry="10"/>
 </g>
 <g filter="url(#blr)" fill="#8a88b4" opacity=".55"><ellipse cx="340" cy="428" rx="14" ry="6"/><ellipse cx="520" cy="414" rx="30" ry="4"/><ellipse cx="470" cy="416" rx="10" ry="4"/></g>
 <g fill="#2a3458" opacity=".75"><ellipse cx="537" cy="419" rx="2.5" ry="1.5"/><ellipse cx="556" cy="422" rx="2.5" ry="1.6"/><ellipse cx="575" cy="421" rx="2.5" ry="1.6"/><ellipse cx="596" cy="424" rx="2.5" ry="1.6"/><ellipse cx="540" cy="428" rx="2.5" ry="1.5"/><ellipse cx="556" cy="431" rx="2.5" ry="1.5"/></g>
 <!-- start orb -->
 <circle cx="14.8" cy="421.8" r="10" fill="url(#orb)" stroke="#3a6a98" stroke-width=".6"/>
 <ellipse cx="14.8" cy="429" rx="6" ry="2.5" fill="#40e0ff" opacity=".55"/>
 <path d="M9 418 Q11.5 416.5 14.3 417.6 L13.8 421.8 Q11 420.8 8.4 422 Z" fill="#f25a22"/>
 <path d="M15.2 417.8 Q18 419 21 416.8 L20.4 421.2 Q17.5 423.2 14.7 422 Z" fill="#78c028"/>
 <path d="M8.3 422.8 Q11 421.6 13.7 422.7 L13.2 427 Q10.5 425.8 7.8 427 Z" fill="#28a8f0"/>
 <path d="M14.6 422.9 Q17.4 424 20.3 422 L19.7 426.5 Q16.8 428.5 14 427.3 Z" fill="#fcc018"/>
 <ellipse cx="14.8" cy="416" rx="7" ry="4" fill="#fff" opacity=".25"/>
 <!-- paint -->
 <ellipse cx="50" cy="424" rx="8" ry="6" fill="#c8e0f4" stroke="#8ab0d0" stroke-width=".6"/>
 <circle cx="45" cy="423.5" r="1.5" fill="#e03030"/><circle cx="48" cy="420.5" r="1.5" fill="#40b040"/><circle cx="51.5" cy="419.5" r="1.5" fill="#f0b020"/><circle cx="49" cy="425" r="1.1" fill="#3a4a6a"/>
 <path d="M50 431 L57.5 416" stroke="#e08020" stroke-width="1.6"/><path d="M56.5 417 L59 413.5 L58.5 417.5 Z" fill="#e8a040"/>
 <!-- btn1 -->
 <rect x="69.5" y="412.3" width="88.5" height="21" rx="2" fill="url(#btn1)" stroke="#6a7890" stroke-width=".8"/>
 <path d="M75.5 416.5 L80.5 415 V430 L75.5 428.5 Z" fill="#e8d070"/><path d="M80.5 415 L86.5 417 V431 L80.5 430 Z" fill="#f4e4a0" stroke="#c8a840" stroke-width=".5"/>
 <!-- coccoc -->
 <circle cx="176.7" cy="422" r="8.6" fill="#5cb040"/>
 <circle cx="176" cy="423" r="5" fill="#fff"/><circle cx="176" cy="423" r="3" fill="#5cb040"/><circle cx="176" cy="423" r="1.3" fill="#fff"/>
 <path d="M178 417 L181 413.5 M181 419 L185 417" stroke="#f07820" stroke-width="1.6"/>
 <!-- btn2 -->
 <rect x="195.3" y="412.3" width="89.8" height="21" rx="2" fill="url(#btn2)" stroke="#b8c2d0" stroke-width=".8"/>
 <path d="M195.5 424 L285 417 V433 H195.5 Z" fill="#000" opacity=".06"/>
 <path d="M202 423 L206 420 H217 V430 H206 L202 427 Z" fill="#555" stroke="#222" stroke-width=".6"/>
 <path d="M202 423 L206 420 H217 L213 423 Z" fill="#9a9a9a"/>
 <rect x="208.5" y="414" width="3" height="10" fill="#f0a020" stroke="#444" stroke-width=".5"/>
 <rect x="208" y="413.5" width="4" height="2.5" fill="#c8c8c8" stroke="#444" stroke-width=".5"/>
 <rect x="208.8" y="425" width="2.6" height="4" rx="1" fill="#d080f0"/>
 <!-- tray -->
 <path d="M661.5 424 L663.8 421.5 L666 424 Z" fill="#f0f0f0"/>
 <rect x="673" y="420.5" width="6" height="5" fill="#dde" stroke="#333" stroke-width=".6"/>
 <rect x="689.5" y="420" width="3" height="4" fill="#ddd"/>
 <rect x="701" y="420.5" width="7" height="5.5" fill="#2a8ae0"/>
 <rect x="682" y="424.5" width="72" height="1" fill="#b07838"/>
</svg>
<div class="t" style="left:94.5px;top:420.2px;font-size:6.45px;color:#e8ecf4">BAN THO CHUYEN</div>
<div class="t" style="left:221px;top:420px;font-size:6.6px;color:#fff">ban chuyen don ...</div>
<div class="t" style="left:720px;top:425px;font-family:'Liberation Serif',serif;font-size:8.2px;color:#d8dae6;transform:scaleX(.9);transform-origin:0 0">01/10/2018</div>
<!-- ===== CNC LOGO ===== -->
<svg class="a" style="left:670px;top:330px" width="98" height="104" viewBox="670 330 98 104">
 <defs><clipPath id="rc"><rect x="676" y="353.3" width="32" height="49.5" rx="5"/></clipPath></defs>
 <rect x="676" y="353.3" width="32" height="49.5" rx="5" fill="#ea1d2a"/>
 <g clip-path="url(#rc)">
  <ellipse cx="697.5" cy="382" rx="14.1" ry="20.8" fill="#fff"/>
  <ellipse cx="695.8" cy="381.7" rx="6.3" ry="12.3" fill="#ea1d2a"/>
  <rect x="695.5" y="375.4" width="14" height="12" fill="#ea1d2a"/>
  <rect x="695.6" y="360" width="1.1" height="10" fill="#ea1d2a"/>
  <rect x="695.6" y="393.5" width="1.1" height="10" fill="#ea1d2a"/>
 </g>
 <path d="M717.5 357.8 L719.3 362.7 L724.3 362.9 L720.3 366 L721.8 371 L717.5 368.2 L713.2 371 L714.7 366 L710.7 362.9 L715.7 362.7 Z" fill="#a87a50"/>
 <path d="M711.3 371 H715.6 V401 H711.3 Z" fill="#1c3c8c"/>
 <path d="M712.5 367.5 L717.5 367.5 L731.4 395 V401 H727 L712.5 373 Z" fill="#1c3c8c"/>
 <path d="M727 362.4 H731.4 V401 H727 Z" fill="#1c3c8c"/>
 <path d="M715.8 372 L728 398" stroke="#fff" stroke-width=".9"/>
 <g>
  <ellipse cx="747.5" cy="381.6" rx="12.6" ry="20.2" fill="#f7941d"/>
  <ellipse cx="748" cy="381.7" rx="6.1" ry="12.3" fill="#f0f0f0"/>
  <rect x="748" y="374.7" width="12" height="14.8" fill="#f0f0f0"/>
  <rect x="748.5" y="360" width="1.1" height="10" fill="#f0f0f0"/>
  <rect x="748.5" y="393.5" width="1.1" height="10" fill="#f0f0f0"/>
 </g>
 <path d="M719 356.5 Q722.5 345 729 335.8 Q730.5 335.5 730.5 337 Q725 346 720.8 357.5 Z" fill="#e8242a"/>
 <path d="M721.3 357.5 Q728 346 736.5 337.5 Q739 336.5 738.8 339 Q731 348 723.3 359.5 Z" fill="#1c3c8c"/>
 <path d="M723.5 362 Q729 353 735.5 347.8 Q737.5 347.5 737 349.5 Q731 355 725.3 363.5 Z" fill="#f7941d"/>
 <rect x="675.5" y="407" width="84.5" height="14" rx="6.5" fill="#1d3a82" stroke="#c8d4f0" stroke-width=".6"/>
</svg>
<div class="t" style="left:679.5px;top:406.9px;font-family:'Liberation Serif',serif;font-weight:bold;font-size:14px;color:#fff;-webkit-text-stroke:.3px #fff;transform:scaleX(.86);transform-origin:0 0">Khomaucnc.vn</div>
</body></html>
